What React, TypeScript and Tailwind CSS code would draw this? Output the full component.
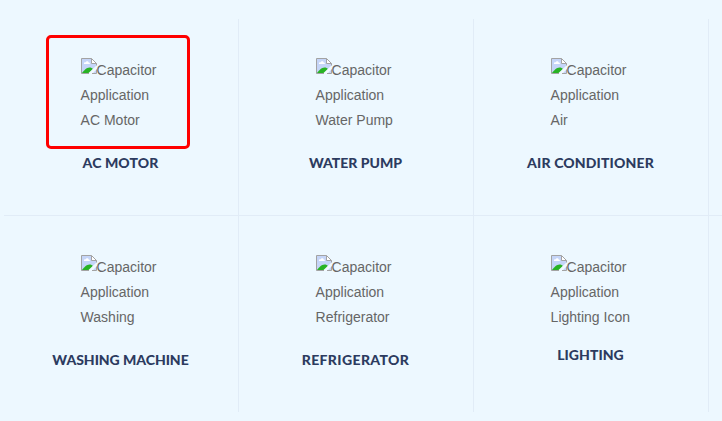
import clsx from "clsx";

interface Application {
  title: string;
  alt: string[];
  titleClass: string;
  highlighted?: boolean;
}

const applications: Application[] = [
  {
    title: "AC MOTOR",
    alt: ["Capacitor", "Application", "AC Motor"],
    titleClass: "mt-5 tracking-[0.1px]",
    highlighted: true,
  },
  {
    title: "WATER PUMP",
    alt: ["Capacitor", "Application", "Water Pump"],
    titleClass: "mt-5",
  },
  {
    title: "AIR CONDITIONER",
    alt: ["Capacitor", "Application", "Air"],
    titleClass: "mt-5 tracking-[0.15px]",
  },
  {
    title: "WASHING MACHINE",
    alt: ["Capacitor", "Application", "Washing"],
    titleClass: "mt-5 tracking-[-0.05px]",
  },
  {
    title: "REFRIGERATOR",
    alt: ["Capacitor", "Application", "Refrigerator"],
    titleClass: "mt-5 tracking-[0.38px]",
  },
  {
    title: "LIGHTING",
    alt: ["Capacitor", "Application", "Lighting Icon"],
    titleClass: "mt-[15px] tracking-[0.05px]",
  },
];

function BrokenImageIcon() {
  return (
    <svg width="16" height="16" viewBox="0 0 16 16" className="shrink-0">
      <path d="M0.5 0.5H10.5L15.5 5.5V15.5H0.5Z" fill="#c5d5f8" />
      <path d="M3 6C2.6 4.6 4 4.1 4.6 4.5C5.2 2.9 7.3 3 7.6 4.4C8.8 4.2 9.2 5.3 8.7 6Z" fill="#fff" />
      <path d="M1 15C3 12.5 5.5 9.5 8.5 9.5C10 9.5 11.3 10.2 12 11L9 15Z" fill="#28b324" />
      <path d="M16 7L7.5 15V16H11L16 11Z" fill="#f1f9ff" />
      <path d="M10.5 0.5V5.5H15.5Z" fill="#fff" />
      <path
        d="M8 15.5H0.5V0.5H10.5M10.5 0.5V5.5H15.5V7.5M15.5 11.5V15.5H11"
        fill="none"
        stroke="#a3a3a3"
      />
      <path d="M10.5 0.5L15.5 5.5" fill="none" stroke="#a3a3a3" />
    </svg>
  );
}

function ApplicationCard({ title, alt, titleClass, highlighted }: Application) {
  return (
    <div className="relative flex flex-col items-center border-r border-b border-[#e1ecf7] pt-[39px]">
      {highlighted && (
        <div className="absolute top-4 left-[42px] h-[114px] w-[143.5px] rounded-[5px] border-3 border-[#ff0000]" />
      )}

      <div className="w-20 text-sm leading-[25px] whitespace-nowrap text-[#666]">
        <div className="flex">
          <BrokenImageIcon />
          <span className="-ml-[0.4px]">{alt[0]}</span>
        </div>
        <div className="-ml-[0.4px]">{alt[1]}</div>
        <div className="-ml-[0.4px]">{alt[2]}</div>
      </div>

      <h3
        className={clsx(
          "mr-px font-['Lato'] text-sm leading-5 font-black whitespace-nowrap text-[#2c3b60]",
          titleClass
        )}
      >
        {title}
      </h3>
    </div>
  );
}

export default function App() {
  return (
    <main className="h-[421px] w-[722px] overflow-hidden bg-[#edf8ff] pt-[19px] pl-1 font-['Liberation_Sans',Arial,sans-serif]">
      <section className="grid grid-cols-[235px_235px_235px_13px] grid-rows-[197px_196px]">
        {applications.slice(0, 3).map((item) => (
          <ApplicationCard key={item.title} {...item} />
        ))}
        <div className="border-b border-[#e1ecf7]" />

        {applications.slice(3).map((item) => (
          <div key={item.title} className="grid overflow-hidden [&>div]:border-b-0">
            <ApplicationCard {...item} />
          </div>
        ))}
      </section>
    </main>
  );
}
